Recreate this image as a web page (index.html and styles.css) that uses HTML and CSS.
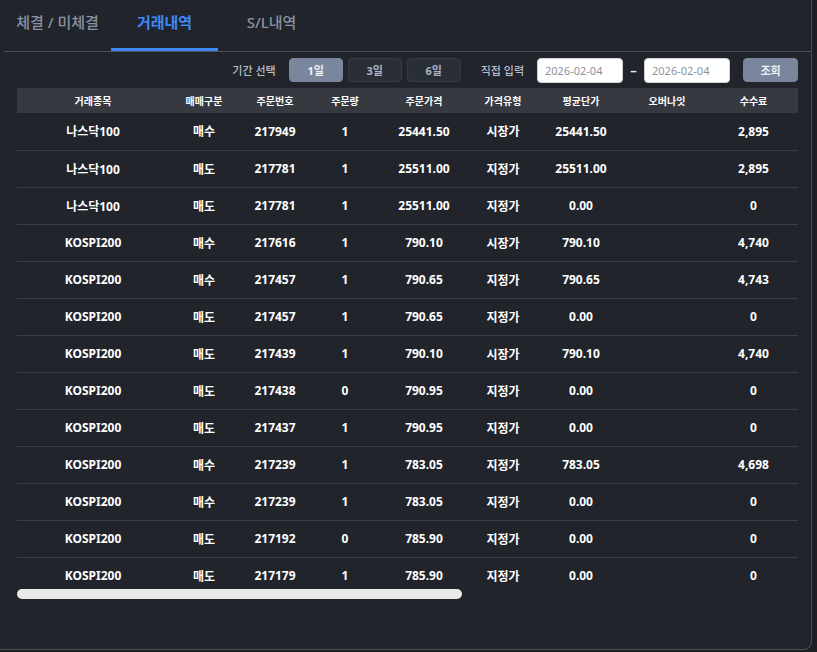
FILE: index.html
```html
<!DOCTYPE html>
<html lang="ko">
<head>
<meta charset="utf-8">
<title>거래내역</title>
<link rel="stylesheet" href="styles.css">
</head>
<body>
<div class="panel">
  <div class="tabs">
    <div class="tab">체결 / 미체결</div>
    <div class="tab active">거래내역</div>
    <div class="tab">S/L내역</div>
  </div>
  <div class="filters">
    <span class="label">기간 선택</span>
    <button class="btn period on">1일</button>
    <button class="btn period">3일</button>
    <button class="btn period">6일</button>
    <span class="label direct">직접 입력</span>
    <input class="date" type="text" placeholder="2026-02-04">
    <span class="dash">–</span>
    <input class="date" type="text" placeholder="2026-02-04">
    <button class="btn search">조회</button>
  </div>
  <div class="table-wrap">
    <table class="grid">
      <colgroup>
        <col style="width:152px"><col style="width:70px"><col style="width:72px"><col style="width:68px"><col style="width:90px"><col style="width:68px"><col style="width:88px"><col style="width:84px"><col style="width:89px">
      </colgroup>
      <thead>
        <tr><th>거래종목</th><th>매매구분</th><th>주문번호</th><th>주문량</th><th>주문가격</th><th>가격유형</th><th>평균단가</th><th>오버나잇</th><th>수수료</th></tr>
      </thead>
      <tbody>
        <tr><td>나스닥100</td><td>매수</td><td>217949</td><td>1</td><td>25441.50</td><td>시장가</td><td>25441.50</td><td></td><td>2,895</td></tr>
        <tr><td>나스닥100</td><td>매도</td><td>217781</td><td>1</td><td>25511.00</td><td>지정가</td><td>25511.00</td><td></td><td>2,895</td></tr>
        <tr><td>나스닥100</td><td>매도</td><td>217781</td><td>1</td><td>25511.00</td><td>지정가</td><td>0.00</td><td></td><td>0</td></tr>
        <tr><td>KOSPI200</td><td>매수</td><td>217616</td><td>1</td><td>790.10</td><td>시장가</td><td>790.10</td><td></td><td>4,740</td></tr>
        <tr><td>KOSPI200</td><td>매수</td><td>217457</td><td>1</td><td>790.65</td><td>지정가</td><td>790.65</td><td></td><td>4,743</td></tr>
        <tr><td>KOSPI200</td><td>매도</td><td>217457</td><td>1</td><td>790.65</td><td>지정가</td><td>0.00</td><td></td><td>0</td></tr>
        <tr><td>KOSPI200</td><td>매도</td><td>217439</td><td>1</td><td>790.10</td><td>시장가</td><td>790.10</td><td></td><td>4,740</td></tr>
        <tr><td>KOSPI200</td><td>매도</td><td>217438</td><td>0</td><td>790.95</td><td>지정가</td><td>0.00</td><td></td><td>0</td></tr>
        <tr><td>KOSPI200</td><td>매도</td><td>217437</td><td>1</td><td>790.95</td><td>지정가</td><td>0.00</td><td></td><td>0</td></tr>
        <tr><td>KOSPI200</td><td>매수</td><td>217239</td><td>1</td><td>783.05</td><td>지정가</td><td>783.05</td><td></td><td>4,698</td></tr>
        <tr><td>KOSPI200</td><td>매수</td><td>217239</td><td>1</td><td>783.05</td><td>지정가</td><td>0.00</td><td></td><td>0</td></tr>
        <tr><td>KOSPI200</td><td>매도</td><td>217192</td><td>0</td><td>785.90</td><td>지정가</td><td>0.00</td><td></td><td>0</td></tr>
        <tr><td>KOSPI200</td><td>매도</td><td>217179</td><td>1</td><td>785.90</td><td>지정가</td><td>0.00</td><td></td><td>0</td></tr>
      </tbody>
    </table>
  </div>
  <div class="hscroll"><div class="thumb"></div></div>
</div>
</body>
</html>
```

FILE: styles.css
```css
* { box-sizing: border-box; }
html, body {
  margin: 0;
  padding: 0;
  background: #1d1f25;
  font-family: "Noto Sans", "Noto Sans CJK KR", sans-serif;
}
.panel {
  width: 812px;
  height: 650px;
  background: #21242b;
  border-right: 1px solid #4a4e57;
  border-bottom: 1px solid #4a4e57;
  border-bottom-right-radius: 8px;
  padding-left: 4px;
  overflow: hidden;
}
.tabs {
  display: flex;
  height: 52px;
  border-bottom: 1px solid #4a4e56;
}
.tab {
  width: 107px;
  height: 51px;
  border-bottom: 3px solid transparent;
  display: flex;
  align-items: center;
  justify-content: center;
  padding-bottom: 6px;
  font-size: 15px;
  font-weight: 500;
  color: #8a93a3;
  white-space: nowrap;
}
.tab.active {
  color: #3f88f6;
  font-weight: 700;
  border-bottom-color: #3f88f6;
}
.filters {
  display: flex;
  align-items: center;
  justify-content: flex-end;
  height: 26px;
  margin-top: 5px;
  margin-right: 13px;
}
.label {
  font-size: 11px;
  font-weight: 500;
  color: #b6bdcb;
  margin-right: 13px;
}
.label.direct { margin-left: 20px; }
.btn {
  font-family: inherit;
  font-size: 11px;
  font-weight: 700;
  height: 24px;
  border-radius: 4px;
  border: 1px solid #353a43;
  background: #2a2e36;
  color: #a9b3c6;
  padding: 0;
  cursor: pointer;
}
.btn.period { width: 54px; margin-left: 5px; }
.btn.period:first-of-type { margin-left: 0; }
.btn.on { background: #7a869e; border-color: #7a869e; color: #eef1f6; }
.btn.search {
  width: 55px;
  margin-left: 13px;
  background: #7a869e;
  border-color: #7a869e;
  color: #eef1f6;
}
.date {
  width: 86px;
  height: 25px;
  border: 1px solid #cfd3d9;
  border-radius: 4px;
  background: #fff;
  font-family: inherit;
  font-size: 11px;
  padding: 0 7px;
  outline: none;
}
.date::placeholder { color: #8e939c; }
.dash {
  color: #e6e9ee;
  font-size: 13px;
  font-weight: 700;
  width: 21px;
  text-align: center;
}
.table-wrap {
  margin: 5px 13px 0 13px;
  height: 501px;
  overflow: hidden;
}
.grid {
  width: 781px;
  table-layout: fixed;
  border-collapse: collapse;
}
.grid th {
  height: 25px;
  background: #363940;
  color: #ffffff;
  font-size: 10px;
  font-weight: 700;
  text-align: center;
  padding: 0;
}
.grid td {
  height: 37px;
  color: #ffffff;
  font-size: 12px;
  font-weight: 700;
  text-align: center;
  padding: 0;
  border-bottom: 1px solid #3a3e47;
}
.hscroll {
  margin: 0 13px 0 13px;
  height: 10px;
}
.thumb {
  width: 445px;
  height: 10px;
  border-radius: 5px;
  background: #e8e9e8;
}
```
